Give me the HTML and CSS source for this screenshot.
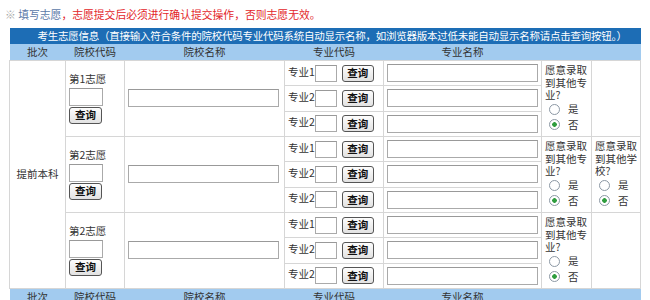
FILE: index.html
```html
<!DOCTYPE html>
<html lang="zh-CN">
<head>
    <meta charset="UTF-8">
    <title>考生志愿信息</title>
    <link rel="stylesheet" href="styles.css">
</head>
<body>
    <p class="notice"><span class="mark">※</span> <span class="hint">填写志愿</span>，志愿提交后必须进行确认提交操作，否则志愿无效。</p>

    <table class="wish-table">
        <colgroup>
            <col style="width: 56px">
            <col style="width: 59px">
            <col style="width: 160px">
            <col style="width: 99px">
            <col style="width: 158px">
            <col style="width: 50px">
            <col style="width: 49px">
        </colgroup>
        <tr class="title-row">
            <td colspan="7">考生志愿信息（直接输入符合条件的院校代码专业代码系统自动显示名称，如浏览器版本过低未能自动显示名称请点击查询按钮。）</td>
        </tr>
        <tr class="head-row">
            <td>批次</td><td>院校代码</td><td>院校名称</td><td>专业代码</td><td>专业名称</td><td></td><td></td>
        </tr>

        <!-- 第1志愿 -->
        <tr class="sub-row">
            <td rowspan="9" class="batch">提前本科</td>
            <td rowspan="3" class="school-code">
                第1志愿<br>
                <input type="text" class="code-box"><br>
                <button class="query-btn">查询</button>
            </td>
            <td rowspan="3" class="school-name"><input type="text" class="name-box"></td>
            <td class="major-code">专业1<input type="text" class="small-box"><button class="query-btn">查询</button></td>
            <td class="major-name"><input type="text" class="name-box"></td>
            <td rowspan="3" class="choice">
                <div class="question">愿意录取到其他专业?</div>
                <label class="opt"><input type="radio" name="m1"> 是</label>
                <label class="opt"><input type="radio" name="m1" checked> 否</label>
            </td>
            <td rowspan="3"></td>
        </tr>
        <tr class="sub-row">
            <td class="major-code">专业2<input type="text" class="small-box"><button class="query-btn">查询</button></td>
            <td class="major-name"><input type="text" class="name-box"></td>
        </tr>
        <tr class="sub-row">
            <td class="major-code">专业2<input type="text" class="small-box"><button class="query-btn">查询</button></td>
            <td class="major-name"><input type="text" class="name-box"></td>
        </tr>

        <!-- 第2志愿 -->
        <tr class="sub-row">
            <td rowspan="3" class="school-code">
                第2志愿<br>
                <input type="text" class="code-box"><br>
                <button class="query-btn">查询</button>
            </td>
            <td rowspan="3" class="school-name"><input type="text" class="name-box"></td>
            <td class="major-code">专业1<input type="text" class="small-box"><button class="query-btn">查询</button></td>
            <td class="major-name"><input type="text" class="name-box"></td>
            <td rowspan="3" class="choice">
                <div class="question">愿意录取到其他专业?</div>
                <label class="opt"><input type="radio" name="m2"> 是</label>
                <label class="opt"><input type="radio" name="m2" checked> 否</label>
            </td>
            <td rowspan="3" class="choice">
                <div class="question">愿意录取到其他学校?</div>
                <label class="opt"><input type="radio" name="s2"> 是</label>
                <label class="opt"><input type="radio" name="s2" checked> 否</label>
            </td>
        </tr>
        <tr class="sub-row">
            <td class="major-code">专业2<input type="text" class="small-box"><button class="query-btn">查询</button></td>
            <td class="major-name"><input type="text" class="name-box"></td>
        </tr>
        <tr class="sub-row">
            <td class="major-code">专业2<input type="text" class="small-box"><button class="query-btn">查询</button></td>
            <td class="major-name"><input type="text" class="name-box"></td>
        </tr>

        <!-- 第3志愿 (原页面仍写作 第2志愿) -->
        <tr class="sub-row">
            <td rowspan="3" class="school-code">
                第2志愿<br>
                <input type="text" class="code-box"><br>
                <button class="query-btn">查询</button>
            </td>
            <td rowspan="3" class="school-name"><input type="text" class="name-box"></td>
            <td class="major-code">专业1<input type="text" class="small-box"><button class="query-btn">查询</button></td>
            <td class="major-name"><input type="text" class="name-box"></td>
            <td rowspan="3" class="choice">
                <div class="question">愿意录取到其他专业?</div>
                <label class="opt"><input type="radio" name="m3"> 是</label>
                <label class="opt"><input type="radio" name="m3" checked> 否</label>
            </td>
            <td rowspan="3"></td>
        </tr>
        <tr class="sub-row">
            <td class="major-code">专业2<input type="text" class="small-box"><button class="query-btn">查询</button></td>
            <td class="major-name"><input type="text" class="name-box"></td>
        </tr>
        <tr class="sub-row">
            <td class="major-code">专业2<input type="text" class="small-box"><button class="query-btn">查询</button></td>
            <td class="major-name"><input type="text" class="name-box"></td>
        </tr>

        <tr class="head-row">
            <td>批次</td><td>院校代码</td><td>院校名称</td><td>专业代码</td><td>专业名称</td><td></td><td></td>
        </tr>
    </table>
</body>
</html>
```

FILE: styles.css
```css
body {
    margin: 0;
    background: #fff;
    font-family: "Noto Sans CJK SC", "DejaVu Sans", sans-serif;
    font-size: 10.5px;
    color: #333;
}
.notice {
    margin: 7px 0 0 5px;
    height: 21px;
    font-size: 10.8px;
    line-height: 14px;
    color: #e3262a;
}
.notice .mark {
    color: #aaa;
}
.notice .hint {
    color: #5b78a8;
}
.wish-table {
    margin-left: 9px;
    width: 631px;
    table-layout: fixed;
    border-collapse: collapse;
}
.wish-table td {
    padding: 0 0 0 3px;
    border: 1px solid #d6d6d6;
    vertical-align: middle;
    line-height: 12px;
}
.title-row td {
    height: 16px;
    padding: 0 0 0 14px;
    border: none;
    background: #1d6db5;
    color: #fff;
    letter-spacing: -0.25px;
    text-align: center;
}
.head-row td {
    height: 16px;
    padding: 0;
    border: none;
    background: #a2cbef;
    color: #333;
    text-align: center;
}
.sub-row {
    height: 25.33px;
}
.batch {
    text-align: center;
}
.wish-table td.batch {
    padding: 0;
}
.school-code {
    line-height: 14px;
}
.code-box {
    width: 34px;
    height: 18px;
    margin: 3px 0 1px;
}
.name-box {
    width: 151px;
    height: 18px;
}
.small-box {
    width: 22px;
    height: 17px;
    margin-right: 5px;
}
input[type="text"] {
    box-sizing: border-box;
    padding: 0;
    border: 1px solid #aaa;
    border-top-color: #999;
    background: #fff;
    vertical-align: middle;
}
.query-btn {
    box-sizing: border-box;
    width: 32px;
    height: 17px;
    padding: 0;
    border: 1px solid #555;
    border-radius: 3px;
    background: linear-gradient(#fdfdfd, #e2e2e2);
    font-family: inherit;
    font-size: 10.5px;
    font-weight: bold;
    line-height: 14px;
    color: #111;
    vertical-align: middle;
}
.school-code .query-btn {
    width: 33px;
}
.choice {
    vertical-align: middle;
}
.question {
    width: 44px;
    line-height: 12.5px;
}
.opt {
    display: flex;
    align-items: center;
    height: 15.5px;
}
.opt input {
    appearance: none;
    box-sizing: border-box;
    width: 11px;
    height: 11px;
    margin: 0 8px 0 4px;
    border: 1px solid #8c98a4;
    border-radius: 50%;
    background: #fff;
}
.opt input:checked {
    background: radial-gradient(circle, #2f9d3e 0 2px, #fff 2.6px);
}
```
